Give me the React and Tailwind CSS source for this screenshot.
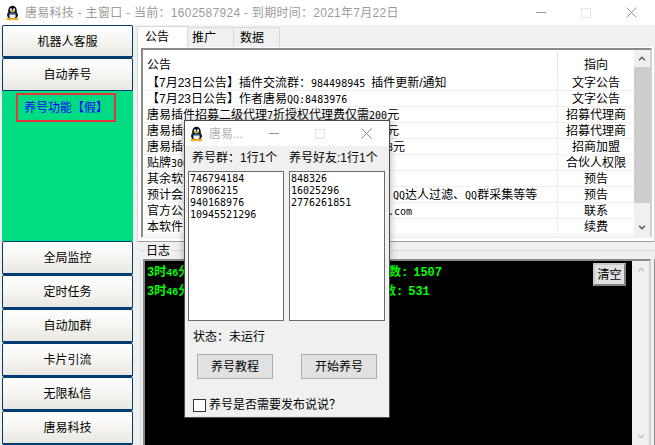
import React from 'react';

const FONT = "font-['Liberation_Sans','Noto_Sans_CJK_SC',sans-serif]";

// narrow digits, the reference draws these at 6px per character
const N = ({ children }) => <span className="font-['DejaVu_Sans_Mono',monospace] text-[10px]">{children}</span>;

const rows = [
  { text: <>【7月23日公告】插件交流群：<N>984498945 </N>插件更新/通知</>, to: '文字公告' },
  { text: <>【7月23日公告】作者唐易<N>QQ:8483976</N></>, to: '文字公告' },
  { text: <>唐易插件招募二级代理<N>7</N>折授权代理费仅需<N>200</N>元</>, to: '招募代理商' },
  { text: '唐易插件', tail: '元', tailClass: 'ml-[192px]', to: '招募代理商' },
  { text: '唐易插件', tail: <><N>8</N>元</>, tailClass: 'ml-[192px]', to: '招商加盟' },
  { text: <>贴牌<N>300</N></>, to: '合伙人权限' },
  { text: '其余软件', to: '预告' },
  { text: '预计会', tail: <><N>QQ</N>达人过滤、<N>QQ</N>群采集等等</>, tailClass: 'ml-[210px]', to: '预告' },
  { text: '官方公告', tail: <N>.com</N>, tailClass: 'ml-[193px]', to: '联系' },
  { text: '本软件', to: '续费' },
];

const topButtons = ['机器人客服', '自动养号'];
const bottomButtons = ['全局监控', '定时任务', '自动加群', '卡片引流', '无限私信', '唐易科技'];

const Penguin = ({ className }) => (
  <svg viewBox="0 0 16 16" className={className}>
    <ellipse cx="8" cy="5.6" rx="4.6" ry="5.4" fill="#0b0f1a" />
    <ellipse cx="8" cy="10" rx="5.8" ry="4.6" fill="#0b0f1a" />
    <ellipse cx="8" cy="11" rx="3.4" ry="3" fill="#eef2f8" />
    <ellipse cx="6.4" cy="4.4" rx="1.1" ry="1.5" fill="#fff" />
    <ellipse cx="9.6" cy="4.4" rx="1.1" ry="1.5" fill="#fff" />
    <ellipse cx="8" cy="6.4" rx="2.4" ry="1" fill="#f5b400" />
    <path d="M3.6 7.6h8.8l-.4 2H4z" fill="#1d4f91" />
    <ellipse cx="4.6" cy="14.4" rx="3" ry="1.3" fill="#f5a800" />
    <ellipse cx="11.4" cy="14.4" rx="3" ry="1.3" fill="#f5a800" />
  </svg>
);

const WinControls = ({ color, stroke, gapClass, boxClass }) => (
  <div className={`flex items-center ${gapClass}`}>
    <div className={`w-[10px] h-px ${color}`} />
    <div className={`w-[10px] h-[10px] border ${boxClass}`} />
    <svg viewBox="0 0 11 11" className="w-[11px] h-[11px]">
      <path d="M0.5 0.5l10 10M10.5 0.5l-10 10" stroke={stroke} strokeWidth="1" fill="none" />
    </svg>
  </div>
);

const SideButton = ({ label, first }) => (
  <button className={`w-full shrink-0 pt-px flex items-center justify-center text-xs text-black bg-gradient-to-b from-white via-[#f6f5f1] to-[#e8e7e1] border border-[#003c74] border-b-2 rounded-[2px] ${first ? 'h-[33px]' : 'h-[34px]'}`}>
    {label}
  </button>
);

const LogLine = ({ gapClass, count }) => (
  <div className="flex">
    <span className={gapClass}>
      3时<span className="text-[10px]">46</span>分
    </span>
    <span>数:<span className="ml-[5px]">{count}</span></span>
  </div>
);

const Dialog = () => (
  <div className="absolute left-[184px] top-[120px] w-[206px] h-[298px] bg-[#f0f0f0] border border-[#4a4a4a] shadow-[0_0_8px_rgba(0,0,0,0.3)] flex flex-col">
    <div className="h-[25px] bg-white flex items-center pl-[4px] pr-[17px] shrink-0">
      <Penguin className="w-[15px] h-[16px]" />
      <span className="ml-[5px] text-xs text-[#b0b0b0]">唐易...</span>
      <div className="flex-1" />
      <WinControls color="bg-[#8f8f8f]" stroke="#8f8f8f" gapClass="gap-[36px]" boxClass="border-[#e2e2e2]" />
    </div>
    <div className="flex px-[3px] mt-[4px] mb-[5px] text-xs text-black h-[16px] items-center shrink-0">
      <span className="w-[101px] pl-[4px]">养号群：1行1个</span>
      <span>养号好友:1行1个</span>
    </div>
    <div className="flex gap-[5px] px-[3px] shrink-0">
      {[['746794184', '78906215', '940168976', '10945521296'], ['848326', '16025296', '2776261851']].map((list, i) => (
        <div key={i} className="w-[96px] h-[150px] bg-white border border-[#6b6b6b] pt-[1px] pl-[1px] font-['DejaVu_Sans_Mono',monospace] text-[10px] leading-[12px] text-black">
          {list.map((n) => <div key={n}>{n}</div>)}
        </div>
      ))}
    </div>
    <div className="mt-[8px] pl-[8px] text-xs leading-[16px] text-black shrink-0">状态：未运行</div>
    <div className="flex gap-[28px] pl-[12px] mt-[9px] shrink-0">
      {['养号教程', '开始养号'].map((t) => (
        <button key={t} className="w-[76px] h-[25px] bg-[#e1e1e1] border border-[#adadad] text-xs text-black">{t}</button>
      ))}
    </div>
    <div className="flex items-center pl-[8px] mt-[18px] text-xs text-black shrink-0">
      <div className="w-[13px] h-[13px] bg-white border border-[#333]" />
      <span className="ml-[3px]">养号是否需要发布说说？</span>
    </div>
  </div>
);

const App = () => {
  return (
    <div className={`relative w-[655px] h-[445px] overflow-hidden bg-[#f0f0f0] ${FONT}`}>
      {/* title bar */}
      <div className="h-[25px] bg-white flex items-center pl-[5px] pr-[18px]">
        <Penguin className="w-[15px] h-[16px]" />
        <span className="ml-[5px] text-xs text-[#9c9c9c] tracking-[0.28px]">唐易科技 - 主窗口 - 当前：1602587924 - 到期时间：2021年7月22日</span>
        <div className="flex-1" />
        <WinControls color="bg-[#9a9a9a]" stroke="#9a9a9a" gapClass="gap-[35px]" boxClass="border-[#e6e6e6]" />
      </div>

      <div className="flex h-[420px]">
        {/* sidebar */}
        <div className="w-[133px] shrink-0 pl-[2px] flex flex-col">
          {topButtons.map((b, i) => <SideButton key={b} label={b} first={i === 0} />)}
          <div className="h-[150px] -mt-px bg-[#00dc82] shrink-0 flex items-start pt-[2px] pl-[14px]">
            <div className="w-[100px] h-[29px] border-2 border-[#e8343c] flex items-center justify-center text-xs text-[#0000ff]">养号功能【假】</div>
          </div>
          {bottomButtons.map((b) => <SideButton key={b} label={b} />)}
        </div>

        {/* right side */}
        <div className="flex-1 min-w-0 pl-[4px] flex flex-col">
          <div className="flex h-[22px] pt-px text-xs text-black shrink-0">
            <div className="w-[51px] h-[21px] bg-white border border-b-0 border-[#d9d9d9] pl-[7px] flex items-center">公告</div>
            <div className="w-[46px] h-[20px] mt-px border-t border-r border-[#d9d9d9] pl-[4px] flex items-center">推广</div>
            <div className="w-[46px] h-[20px] mt-px border-t border-r border-[#d9d9d9] pl-[6px] flex items-center">数据</div>
          </div>

          {/* notice panel */}
          <div className="h-[195px] shrink-0 bg-white border border-t-0 border-[#d9d9d9] border-b-[#a0a0a0] pl-[3px] pr-[2px] pb-[3px] pt-[1px]">
            <div className="h-full border-2 border-[#8a8a8a] border-b-[#f0f0f0] border-r-[#d0d0d0] flex text-xs text-black bg-white">
              <div className="w-[491px] shrink-0 overflow-hidden">
                <div className="flex h-[25px] pt-[2px]">
                  <div className="w-[414px] shrink-0 pl-[4px] pt-[2px] flex items-center">公告</div>
                  <div className="w-[77px] shrink-0 border-l border-[#e5e5e5] pt-[2px] flex items-center justify-center">指向</div>
                </div>
                {rows.map((r, i) => (
                  <div key={i} className="flex h-[16px] border-b border-[#f0f0f0] leading-[17px]">
                    <div className="w-[414px] shrink-0 pl-[4px] whitespace-nowrap overflow-hidden flex">
                      <span>{r.text}</span>
                      {r.tail && <span className={r.tailClass}>{r.tail}</span>}
                    </div>
                    <div className="w-[77px] shrink-0 border-l border-[#f0f0f0] text-center">{r.to}</div>
                  </div>
                ))}
              </div>
              <div className="w-[16px] shrink-0 bg-[#f0f0f0] flex flex-col items-center">
                <svg viewBox="0 0 9 6" className="w-[8px] h-[5px] mt-[6px] mb-[6px]"><path d="M1 5l3.5-3.5L8 5" stroke="#555" strokeWidth="1.6" fill="none" /></svg>
                <div className="w-full h-[136px] bg-[#cdcdcd]" />
                <div className="flex-1" />
                <svg viewBox="0 0 9 6" className="w-[8px] h-[5px] mb-[6px]"><path d="M1 1l3.5 3.5L8 1" stroke="#555" strokeWidth="1.6" fill="none" /></svg>
              </div>
            </div>
          </div>

          {/* log */}
          <div className="flex items-center h-[17px] pl-[3px] text-xs text-black shrink-0">
            <div className="w-[5px] border-t border-[#d9d9d9]" />
            <span className="px-[1px]">日志</span>
            <div className="flex-1 border-t border-[#d9d9d9]" />
          </div>
          <div className="flex-1 min-h-0 ml-[3px] border-l border-r border-[#d9d9d9] border-r-[#8a8a8a] pl-[2px] pr-[3px]">
            <div className="h-full border-t-2 border-l-2 border-r-2 border-[#8a8a8a] border-r-[#d0d0d0] flex">
              <div className="flex-1 min-w-0 bg-black flex justify-between items-start pt-[2px] pr-[6px] pl-[2px]">
                <div className="font-['Liberation_Mono','Noto_Sans_CJK_SC',monospace] font-bold text-xs leading-[18px] text-[#00ff00] pt-[1px]">
                  <LogLine gapClass="w-[242px]" count="1507" />
                  <LogLine gapClass="w-[237px]" count="531" />
                </div>
                <button className="w-[33px] h-[23px] bg-[#e1e1e1] border-2 border-[#c8c8c8] border-r-[#808080] border-b-[#808080] text-xs text-black">清空</button>
              </div>
              <div className="w-[17px] shrink-0 bg-[#f0f0f0] flex flex-col items-center justify-between py-[6px]">
                <svg viewBox="0 0 9 6" className="w-[8px] h-[5px]"><path d="M1 5l3.5-3.5L8 5" stroke="#c4c4c4" strokeWidth="1.6" fill="none" /></svg>
                <svg viewBox="0 0 9 6" className="w-[8px] h-[5px]"><path d="M1 1l3.5 3.5L8 1" stroke="#c4c4c4" strokeWidth="1.6" fill="none" /></svg>
              </div>
            </div>
          </div>
        </div>
      </div>

      <Dialog />
    </div>
  );
};

export default App;
